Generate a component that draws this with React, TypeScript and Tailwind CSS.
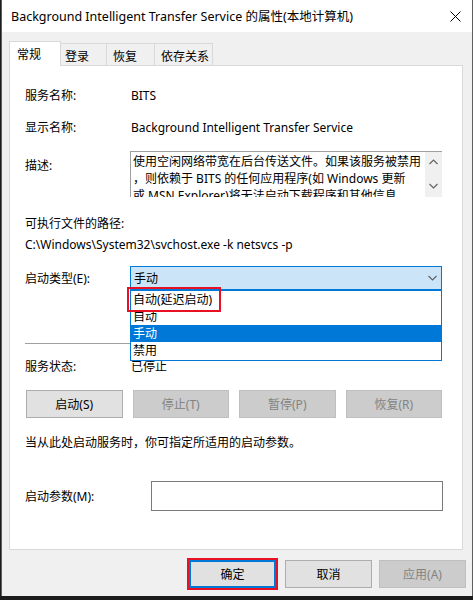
import React from "react";

const FONT = { fontFamily: '"Noto Sans", "Noto Sans CJK SC", sans-serif' };

function Chevron({ up = false, color = "#606060" }: { up?: boolean; color?: string }) {
  return (
    <svg width="9" height="6" viewBox="0 0 9 6" className="block">
      {up ? (
        <polyline points="0.5,5 4.5,1 8.5,5" fill="none" stroke={color} strokeWidth="1.1" />
      ) : (
        <polyline points="0.5,1 4.5,5 8.5,1" fill="none" stroke={color} strokeWidth="1.1" />
      )}
    </svg>
  );
}

function Btn({ label, disabled = false }: { label: string; disabled?: boolean }) {
  return (
    <div
      className={
        "flex-1 h-[28px] flex items-center justify-center border text-[12px] " +
        (disabled
          ? "bg-[#cccccc] border-[#bfbfbf] text-[#838383]"
          : "bg-[#e1e1e1] border-[#adadad] text-black")
      }
    >
      {label}
    </div>
  );
}

export default function App() {
  return (
    <div className="w-[473px] h-[600px] bg-[#1c1c1c] overflow-hidden text-black" style={FONT}>
      <div className="w-[472px] h-[596px] ml-px border-x border-[#5f5f5f] bg-[#f0f0f0] flex flex-col text-[12px] leading-[17px]">
        {/* Title bar */}
        <div className="h-[32px] bg-white flex items-center justify-between pl-[9px] pr-[10px] shrink-0">
          <span className="text-[12.5px] text-black whitespace-nowrap">
            Background Intelligent Transfer Service 的属性(本地计算机)
          </span>
          <svg width="11" height="11" viewBox="0 0 11 11" className="block mr-[1px]">
            <line x1="0.5" y1="0.5" x2="10.5" y2="10.5" stroke="#000" strokeWidth="1" />
            <line x1="10.5" y1="0.5" x2="0.5" y2="10.5" stroke="#000" strokeWidth="1" />
          </svg>
        </div>

        {/* Body */}
        <div className="flex flex-col pl-[7px] pr-[6px] pt-[9px]">
          {/* Tabs */}
          <div className="flex items-end h-[24px] relative z-10">
            <div className="w-[52px] h-[25px] mb-[-1px] bg-white border border-b-0 border-[#d9d9d9] pl-[7px] pt-[4px]">
              常规
            </div>
            <div className="w-[46px] h-[22px] border-t border-r border-[#d9d9d9] pl-[4px] pt-[4px]">登录</div>
            <div className="w-[48px] h-[22px] border-t border-r border-[#d9d9d9] pl-[6px] pt-[4px]">恢复</div>
            <div className="w-[58px] h-[22px] border-t border-r border-[#d9d9d9] pl-[6px] pt-[4px]">依存关系</div>
          </div>

          {/* Panel */}
          <div className="w-[454px] h-[485px] bg-white border border-[#d9d9d9] pl-[15px] flex flex-col relative">
            <div className="mt-[21px] flex h-[17px]">
              <span className="w-[106px]">服务名称:</span>
              <span>BITS</span>
            </div>
            <div className="mt-[15px] flex h-[17px]">
              <span className="w-[106px]">显示名称:</span>
              <span className="whitespace-nowrap">Background Intelligent Transfer Service</span>
            </div>
            <div className="mt-[15px] flex h-[46px]">
              <span className="w-[105px] pt-[6px]">描述:</span>
              <div className="w-[312px] h-[46px] border-t border-l border-[#a0a0a0] flex overflow-hidden">
                <div className="flex-1 pl-[2px] pt-[1px] leading-[17px] whitespace-nowrap overflow-hidden">
                  <div>使用空闲网络带宽在后台传送文件。如果该服务被禁用</div>
                  <div>，则依赖于 BITS 的任何应用程序(如 Windows 更新</div>
                  <div>或 MSN Explorer)将无法启动下载程序和其他信息</div>
                </div>
                <div className="w-[17px] bg-[#f0f0f0] flex flex-col items-center justify-between pt-[7px] pb-[8px]">
                  <Chevron up />
                  <Chevron />
                </div>
              </div>
            </div>
            <div className="mt-[18px] h-[17px]">可执行文件的路径:</div>
            <div className="mt-[4px] h-[17px] whitespace-nowrap">C:\Windows\System32\svchost.exe -k netsvcs -p</div>

            <div className="mt-[13px] flex items-center h-[24px] relative">
              <span className="w-[105px]">启动类型(E):</span>
              <div className="w-[312px] h-[24px] bg-[#cce4f7] border border-[#0078d7] flex items-center justify-between pl-[3px] pr-[4px]">
                <span>手动</span>
                <Chevron />
              </div>
              {/* Dropdown list */}
              <div className="absolute left-[105px] top-[24px] w-[312px] h-[71px] bg-white border border-[#0078d7] z-20 flex flex-col">
                <div className="h-[17px] pl-[2px]">自动(延迟启动)</div>
                <div className="h-[17px] pl-[2px]">自动</div>
                <div className="h-[17px] pl-[2px] bg-[#0078d7] text-white">手动</div>
                <div className="h-[17px] pl-[2px]">禁用</div>
              </div>
              <div className="absolute left-[102px] top-[21px] w-[94px] h-[25px] border-2 border-[#e81123] z-30" />
            </div>

            <div className="mt-[53px] w-[416px] h-px bg-[#a0a0a0]" />
            <div className="mt-[14px] flex h-[17px]">
              <span className="w-[106px]">服务状态:</span>
              <span>已停止</span>
            </div>

            <div className="mt-[15px] ml-px w-[416px] flex gap-[10px]">
              <Btn label="启动(S)" />
              <Btn label="停止(T)" disabled />
              <Btn label="暂停(P)" disabled />
              <Btn label="恢复(R)" disabled />
            </div>

            <div className="mt-[16px] h-[17px]">当从此处启动服务时，你可指定所适用的启动参数。</div>

            <div className="mt-[30px] flex items-center h-[30px]">
              <span className="w-[126px]">启动参数(M):</span>
              <div className="w-[292px] h-[30px] border border-[#7a7a7a] bg-white" />
            </div>
          </div>

          {/* Bottom buttons */}
          <div className="mt-[10px] flex justify-end">
            <div className="w-[87px] h-[28px] flex items-center justify-center bg-[#e1e1e1] border-2 border-[#0078d7] outline-2 outline-[#e81123]">
              确定
            </div>
            <div className="ml-[9px] w-[87px] h-[28px] flex items-center justify-center bg-[#e1e1e1] border border-[#adadad]">
              取消
            </div>
            <div className="ml-[7px] w-[87px] h-[28px] flex items-center justify-center bg-[#cccccc] border border-[#bfbfbf] text-[#838383]">
              应用(A)
            </div>
          </div>
        </div>
      </div>
    </div>
  );
}
